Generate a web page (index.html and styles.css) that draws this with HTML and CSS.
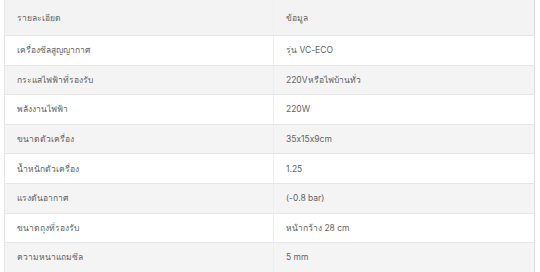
FILE: index.html
```html
<!DOCTYPE html>
<html lang="th">
<head>
<meta charset="utf-8">
<link rel="stylesheet" href="styles.css">
</head>
<body>
<table class="spec">
  <thead>
    <tr><th class="label">รายละเอียด</th><th class="value">ข้อมูล</th></tr>
  </thead>
  <tbody>
    <tr><td class="label">เครื่องซีลสูญญากาศ</td><td class="value">รุ่น VC-ECO</td></tr>
    <tr><td class="label">กระแสไฟฟ้าที่รองรับ</td><td class="value">220Vหรือไฟบ้านทั่ว</td></tr>
    <tr><td class="label">พลังงานไฟฟ้า</td><td class="value">220W</td></tr>
    <tr><td class="label">ขนาดตัวเครื่อง</td><td class="value">35x15x9cm</td></tr>
    <tr><td class="label">น้ำหนักตัวเครื่อง</td><td class="value">1.25</td></tr>
    <tr><td class="label">แรงดันอากาศ</td><td class="value">(-0.8 bar)</td></tr>
    <tr><td class="label">ขนาดถุงที่รองรับ</td><td class="value">หน้ากว้าง 28 cm</td></tr>
    <tr><td class="label">ความหนาแถมซีล</td><td class="value">5 mm</td></tr>
  </tbody>
</table>
</body>
</html>
```
FILE: styles.css
```css
html, body {
  margin: 0;
  padding: 0;
  background: #ffffff;
}
body {
  padding-left: 4px;
  font-family: Inter, "Noto Sans", sans-serif;
  font-size: 8.5px;
  font-feature-settings: "calt" 0;
  color: #636363;
}
.spec {
  width: 531px;
  border-collapse: collapse;
  table-layout: fixed;
  border-left: 1px solid #e6e6e6;
  border-right: 1px solid #dcdcdc;
}
.spec th,
.spec td {
  text-align: left;
  font-weight: 400;
  padding: 0 12px;
  border-bottom: 1px solid #e6e6e6;
  vertical-align: middle;
  white-space: nowrap;
}
.spec th.label,
.spec td.label {
  width: 269px;
  box-sizing: border-box;
  border-right: 1px solid #efefef;
}
.spec th {
  height: 35px;
  background: #f3f3f3;
}
.spec td {
  height: 28.6px;
}
.spec tbody tr:nth-child(odd) td {
  background: #ffffff;
}
.spec tbody tr:nth-child(even) td {
  background: #f4f4f4;
}
```
